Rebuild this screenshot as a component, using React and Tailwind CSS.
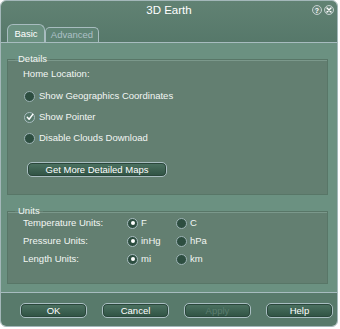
import React from 'react';

const font = { fontFamily: '"Liberation Sans", Arial, sans-serif' };

// --- small widgets ---
const Radio = ({ checked }) =>
  checked ? (
    <span className="w-[11px] h-[11px] shrink-0 rounded-full border border-[#a9bdc0] bg-[#2c4d3f] flex items-center justify-center">
      <span className="w-[4px] h-[4px] rounded-full bg-white" />
    </span>
  ) : (
    <span className="w-[11px] h-[11px] shrink-0 rounded-full border border-[#9db3b5] bg-[#2d4e40]" />
  );

const Check = () => (
  <span className="w-[11px] h-[11px] shrink-0 rounded-full border border-[#a9bdc0] bg-[#56786a] flex items-center justify-center">
    <svg width="8" height="8" viewBox="0 0 8 8">
      <path d="M1.3 4.2 L3.1 6.2 L6.8 1.4" stroke="white" strokeWidth="1.5" fill="none" strokeLinecap="round" strokeLinejoin="round" />
    </svg>
  </span>
);

const Button = ({ children, disabled, className = '' }) => (
  <button
    className={`h-[15px] rounded-[5px] border border-[#a9bec1] bg-linear-to-b from-[#4d7362] to-[#2f5243] shadow-[inset_0_0_0_1px_#2a473b] text-[9.5px] leading-none flex items-center justify-center ${disabled ? 'text-[#5b7d6f]' : 'text-white'} ${className}`}
  >
    {children}
  </button>
);

const Group = ({ title, children, className = '' }) => (
  <fieldset className={`w-[321px] border border-[#587667] bg-[#637f71] shadow-[inset_0_1px_0_#7b988b] ${className}`}>
    <legend className="ml-[7px] px-[3px] text-[9.5px] leading-[12px] text-[#f2f6f3]">{title}</legend>
    {children}
  </fieldset>
);

const UnitRow = ({ label, a, b, className = '' }) => (
  <div className={`flex items-center h-[12px] text-[9.5px] leading-[12px] text-[#f2f6f3] ${className}`}>
    <span className="w-[104px]">{label}</span>
    <span className="w-[49px] flex items-center gap-[3px]">
      <Radio checked />
      <span>{a}</span>
    </span>
    <span className="flex items-center gap-[3px]">
      <Radio />
      <span>{b}</span>
    </span>
  </div>
);

export default function App() {
  return (
    <div className="w-[340px] h-[329px] bg-white" style={font}>
      <div className="w-[338px] h-[327px] rounded-[6px] border border-[#a3b7b9] overflow-hidden flex flex-col">
        {/* title bar */}
        <div className="h-[41px] bg-linear-to-b from-[#618273] to-[#56786a] relative flex items-end pl-[6px]">
          <div className="absolute top-[2px] left-0 right-0 text-center text-[11.5px] leading-[14px] text-white">3D Earth</div>
          <div className="absolute top-[4px] right-[3px] flex gap-[2px]">
            <span className="w-[10px] h-[10px] rounded-full border border-[#c2cfce] bg-[#6c897d] flex items-center justify-center text-[7px] leading-none text-white font-bold">?</span>
            <span className="w-[10px] h-[10px] rounded-full border border-[#c2cfce] bg-[#6c897d] flex items-center justify-center">
              <svg width="6" height="6" viewBox="0 0 6 6">
                <path d="M1 1 L5 5 M5 1 L1 5" stroke="white" strokeWidth="1.4" strokeLinecap="round" />
              </svg>
            </span>
          </div>
          {/* tabs */}
          <div className="w-[38px] h-[18px] rounded-t-[6px] border border-b-0 border-[#a7bcbf] bg-[#6b9181] text-[9.5px] leading-none text-white flex items-center justify-center">
            Basic
          </div>
          <div className="w-[54px] h-[15px] rounded-t-[5px] border border-b-0 border-[#a7bcbf] bg-[#5f8475] text-[9.5px] leading-none text-[#adc0c6] flex items-center justify-center">
            Advanced
          </div>
        </div>

        {/* tab content */}
        <div className="h-[251px] bg-[#6b9181] border-y border-[#a7bcbf] pt-[10px] pl-[6px]">
          <Group title="Details" className="pb-[17px]">
            <div className="flex flex-col pl-[15px] text-[9.5px] leading-[12px] text-[#f2f6f3]">
              <span className="mt-[3px]">Home Location:</span>
              <div className="ml-[1px] mt-[9px] h-[14px] flex items-center gap-[4px]">
                <Radio />
                <span>Show Geographics Coordinates</span>
              </div>
              <div className="ml-[1px] mt-[7px] h-[14px] flex items-center gap-[4px]">
                <Check />
                <span>Show Pointer</span>
              </div>
              <div className="ml-[1px] mt-[7px] h-[14px] flex items-center gap-[4px]">
                <Radio />
                <span>Disable Clouds Download</span>
              </div>
              <Button className="ml-[4px] mt-[17px] w-[140px]">Get More Detailed Maps</Button>
            </div>
          </Group>

          <Group title="Units" className="mt-[10px] pb-[18px]">
            <div className="flex flex-col pl-[15px]">
              <UnitRow label="Temperature Units:" a="F" b="C" />
              <UnitRow label="Pressure Units:" a="inHg" b="hPa" className="mt-[6px]" />
              <UnitRow label="Length Units:" a="mi" b="km" className="mt-[6px]" />
            </div>
          </Group>
        </div>

        {/* bottom buttons */}
        <div className="flex-1 bg-[#587a6b] flex pt-[10px] pl-[19px] gap-[15px]">
          <Button className="w-[67px]">OK</Button>
          <Button className="w-[67px]">Cancel</Button>
          <Button className="w-[67px]" disabled>Apply</Button>
          <Button className="w-[67px]">Help</Button>
        </div>
      </div>
    </div>
  );
}
